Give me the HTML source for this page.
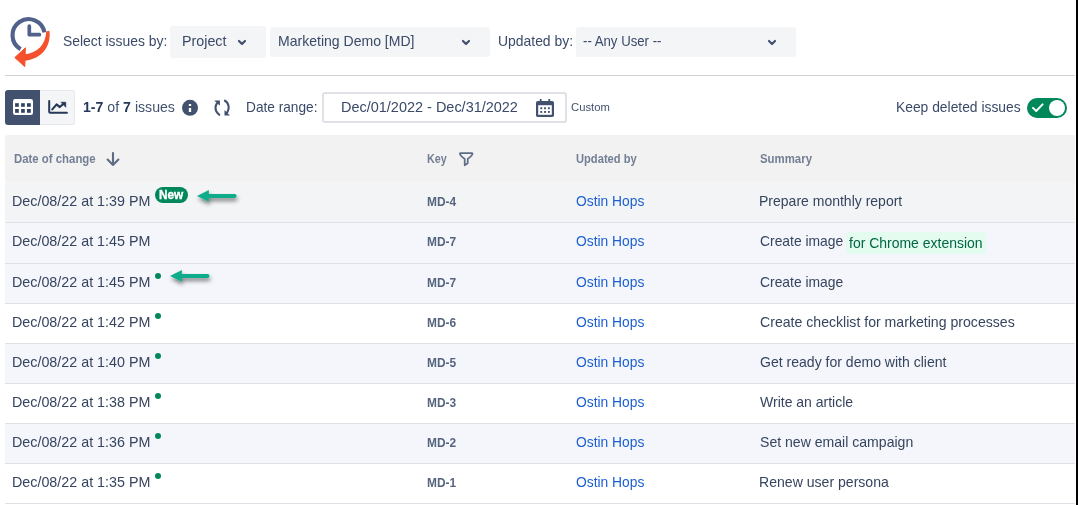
<!DOCTYPE html>
<html><head><meta charset="utf-8"><style>
html,body{margin:0;padding:0;}
body{-webkit-font-smoothing:antialiased;width:1078px;height:505px;overflow:hidden;position:relative;background:#fff;font-family:"Liberation Sans",sans-serif;}
.t{position:absolute;white-space:nowrap;}
b{font-weight:700}
</style></head><body><div style="position:absolute;left:0;top:0;width:1078px;height:505px;will-change:transform">
<svg style="position:absolute;left:0;top:0" width="60" height="72" viewBox="0 0 60 72">
<path d="M20.55 49.14 A16.1 16.1 0 1 1 44.46 32.4" fill="none" stroke="#50618a" stroke-width="4.1"/>
<path d="M29.3 26.2 V34.7 H39.4" fill="none" stroke="#50618a" stroke-width="3.7" stroke-linecap="round" stroke-linejoin="round"/>
<path d="M46.2 31.6 L49.4 30.8 C51.5 46 42 59 25 60.8 L25 54.3 C37 53 45.8 45 46.2 31.6 Z" fill="#f4512c"/>
<path d="M14.8 57.6 L25.4 47.8 L24.8 66.6 Z" fill="#f4512c" stroke="#f4512c" stroke-width="1" stroke-linejoin="round"/>
</svg>
<div class="t" style="left:62.77px;top:32.80px;font-size:14.5px;line-height:16px;font-weight:400;color:#3a4a68;transform:scaleX(0.9586);transform-origin:0 0;">Select issues by:</div>
<div style="position:absolute;left:170px;top:26px;width:96px;height:31.5px;background:#f4f5f7;border-radius:3px"></div>
<div class="t" style="left:181.63px;top:32.80px;font-size:14.5px;line-height:16px;font-weight:400;color:#3a4a68;transform:scaleX(0.9856);transform-origin:0 0;">Project</div>
<svg style="position:absolute;left:237px;top:38.5px" width="10" height="8" viewBox="0 0 10 8"><path d="M2 2 L5 5 L8 2" fill="none" stroke="#42526e" stroke-width="2.2" stroke-linecap="round" stroke-linejoin="round"/></svg>
<div style="position:absolute;left:270px;top:27px;width:220px;height:30px;background:#f4f5f7;border-radius:3px"></div>
<div class="t" style="left:277.65px;top:33.10px;font-size:14.5px;line-height:16px;font-weight:400;color:#3a4a68;transform:scaleX(0.9677);transform-origin:0 0;">Marketing Demo [MD]</div>
<svg style="position:absolute;left:461px;top:38.5px" width="10" height="8" viewBox="0 0 10 8"><path d="M2 2 L5 5 L8 2" fill="none" stroke="#42526e" stroke-width="2.2" stroke-linecap="round" stroke-linejoin="round"/></svg>
<div class="t" style="left:497.83px;top:33.00px;font-size:14.5px;line-height:16px;font-weight:400;color:#3a4a68;transform:scaleX(0.9597);transform-origin:0 0;">Updated by:</div>
<div style="position:absolute;left:576px;top:27px;width:220px;height:30px;background:#f4f5f7;border-radius:3px"></div>
<div class="t" style="left:582.91px;top:33.00px;font-size:14.5px;line-height:16px;font-weight:400;color:#3a4a68;transform:scaleX(0.9100);transform-origin:0 0;">-- Any User --</div>
<svg style="position:absolute;left:767px;top:38.5px" width="10" height="8" viewBox="0 0 10 8"><path d="M2 2 L5 5 L8 2" fill="none" stroke="#42526e" stroke-width="2.2" stroke-linecap="round" stroke-linejoin="round"/></svg>
<div style="position:absolute;left:5px;top:75px;width:1070px;height:1px;background:#cfcfcf"></div>
<div style="position:absolute;left:5px;top:90px;width:35px;height:35px;background:#42526e;border-radius:3px 0 0 3px"></div>
<svg style="position:absolute;left:5px;top:90px" width="35" height="35" viewBox="0 0 35 35">
<rect x="8" y="9" width="20" height="16" rx="2.2" fill="#fff"/>
<g fill="#33425f"><rect x="10.1" y="13.2" width="3.7" height="3.6"/><rect x="16.1" y="13.2" width="3.7" height="3.6"/><rect x="22" y="13.2" width="3.8" height="3.6"/>
<rect x="10.1" y="19" width="3.7" height="3.8"/><rect x="16.1" y="19" width="3.7" height="3.8"/><rect x="22" y="19" width="3.8" height="3.8"/></g>
</svg>
<div style="position:absolute;left:40px;top:90px;width:35px;height:35px;box-sizing:border-box;background:#f4f5f7;border:1px solid #e6e8ec;border-left:none;border-radius:0 3px 3px 0"></div>
<svg style="position:absolute;left:40px;top:88px" width="40" height="40" viewBox="0 0 40 40">
<path d="M9.2 12.9 V23.7 Q9.2 24.7 10.2 24.7 H26.9" fill="none" stroke="#253858" stroke-width="2" stroke-linecap="round"/>
<path d="M12.3 21.4 L16.6 16.4 L19.8 19.1 L23.8 15.4" fill="none" stroke="#253858" stroke-width="2.1" stroke-linecap="round" stroke-linejoin="round"/>
<path d="M20.9 14.2 L25.8 14.2 L25.8 19.3 Z" fill="#253858" stroke="#253858" stroke-width="0.6" stroke-linejoin="round"/>
</svg>
<div class="t" style="left:82.91px;top:98.70px;font-size:14.5px;line-height:16px;color:#42526e;transform:scaleX(0.9746);transform-origin:0 0"><b style="color:#253858">1-7</b> of <b style="color:#253858">7</b> issues</div>
<svg style="position:absolute;left:181px;top:99px" width="18" height="18" viewBox="0 0 18 18">
<circle cx="9" cy="8.8" r="8" fill="#42526e"/><rect x="7.85" y="5" width="2.3" height="2" fill="#fff"/><rect x="7.85" y="9" width="2.3" height="4" fill="#fff"/></svg>
<svg style="position:absolute;left:212px;top:98px" width="20" height="20" viewBox="0 0 20 20">
<path d="M6.5 4.2 C3.2 6.2 1.6 12.2 7.3 16.8" fill="none" stroke="#42526e" stroke-width="2.1" stroke-linecap="round"/>
<path d="M12.9 2.7 C16.6 4.6 18.6 10.8 14 15.7" fill="none" stroke="#42526e" stroke-width="2.1" stroke-linecap="round"/>
<path d="M2.2 2.4 L7.9 2.4 L7.9 7.8 Z" fill="#42526e"/>
<path d="M12.5 12.1 L12.5 17.5 L17.9 17.5 Z" fill="#42526e"/>
</svg>
<div class="t" style="left:246.08px;top:98.80px;font-size:14.5px;line-height:16px;font-weight:400;color:#3a4a68;transform:scaleX(0.9432);transform-origin:0 0;">Date range:</div>
<div style="position:absolute;left:321.5px;top:92.2px;width:245px;height:31px;box-sizing:border-box;border:2px solid #dfe1e6;border-radius:3px;background:#fff"></div>
<div class="t" style="left:340.81px;top:98.90px;font-size:14.5px;line-height:16px;font-weight:400;color:#3a4a68;transform:scaleX(0.9976);transform-origin:0 0;">Dec/01/2022 - Dec/31/2022</div>
<svg style="position:absolute;left:535px;top:98px" width="20" height="20" viewBox="0 0 20 20">
<rect x="1" y="3" width="18" height="16" rx="1.8" fill="#42526e"/>
<rect x="3.2" y="7.2" width="13.6" height="9.6" fill="#fff"/>
<rect x="4.8" y="1" width="1.8" height="3" fill="#42526e"/><rect x="13.4" y="1" width="1.8" height="3" fill="#42526e"/>
<g fill="#42526e"><rect x="5.3" y="9.3" width="1.9" height="1.9"/><rect x="9.1" y="9.3" width="1.9" height="1.9"/><rect x="12.9" y="9.3" width="1.9" height="1.9"/>
<rect x="5.3" y="13" width="1.9" height="1.9"/><rect x="9.1" y="13" width="1.9" height="1.9"/><rect x="12.9" y="13" width="1.9" height="1.9"/></g>
</svg>
<div class="t" style="left:570.93px;top:100.70px;font-size:10.8px;line-height:12px;font-weight:400;color:#42526e;transform:scaleX(1.0431);transform-origin:0 0;">Custom</div>
<div class="t" style="left:896.26px;top:98.80px;font-size:14.5px;line-height:16px;font-weight:400;color:#3a4a68;transform:scaleX(0.9544);transform-origin:0 0;">Keep deleted issues</div>
<div style="position:absolute;left:1027px;top:98px;width:40px;height:20px;background:#00875a;border-radius:10px"></div>
<div style="position:absolute;left:1049px;top:100px;width:16px;height:16px;background:#fff;border-radius:50%"></div>
<svg style="position:absolute;left:1030px;top:101px" width="16" height="14" viewBox="0 0 16 14"><path d="M3 6.9 L6.2 10 L12.6 3.4" fill="none" stroke="#fff" stroke-width="2" stroke-linecap="round" stroke-linejoin="round"/></svg>
<div style="position:absolute;left:5px;top:135px;width:1070px;height:47px;background:#f2f2f2;border-radius:3px 0 0 3px"></div>
<div class="t" style="left:13.54px;top:150.90px;font-size:13px;line-height:15px;font-weight:700;color:#737f94;transform:scaleX(0.8762);transform-origin:0 0;">Date of change</div>
<svg style="position:absolute;left:104px;top:150px" width="18" height="18" viewBox="0 0 18 18"><path d="M9 3 V15 M3.6 9.6 L9 15 L14.4 9.6" fill="none" stroke="#5e6c84" stroke-width="2.1" stroke-linecap="round" stroke-linejoin="round"/></svg>
<div class="t" style="left:427.48px;top:151.20px;font-size:13px;line-height:15px;font-weight:700;color:#737f94;transform:scaleX(0.8294);transform-origin:0 0;">Key</div>
<svg style="position:absolute;left:458px;top:151px" width="16" height="16" viewBox="0 0 16 16"><path d="M2.6 2.1 H13.8 Q14.9 2.1 14.3 3.4 Q13.6 5 11.4 6.6 L9.7 8 V12.3 L6.7 14.3 V8 L5 6.6 Q2.8 5 2.1 3.4 Q1.5 2.1 2.6 2.1 Z" fill="none" stroke="#5e6c84" stroke-width="1.7" stroke-linejoin="round"/></svg>
<div class="t" style="left:576.33px;top:151.20px;font-size:13px;line-height:15px;font-weight:700;color:#737f94;transform:scaleX(0.8580);transform-origin:0 0;">Updated by</div>
<div class="t" style="left:760.37px;top:150.90px;font-size:13px;line-height:15px;font-weight:700;color:#737f94;transform:scaleX(0.8775);transform-origin:0 0;">Summary</div>
<div style="position:absolute;left:5px;top:182px;width:1070px;height:40px;background:#f3f4f6"></div>
<div style="position:absolute;left:5px;top:222px;width:1070px;height:1px;background:#dfe1e6"></div>
<div class="t" style="left:12.43px;top:192.70px;font-size:14.5px;line-height:16px;font-weight:400;color:#36455f;transform:scaleX(0.9864);transform-origin:0 0;">Dec/08/22 at 1:39 PM</div>
<div class="t" style="left:426.50px;top:194.90px;font-size:12.5px;line-height:14px;font-weight:700;color:#56657e;transform:scaleX(0.9544);transform-origin:0 0;">MD-4</div>
<div class="t" style="left:575.95px;top:192.70px;font-size:14.5px;line-height:16px;font-weight:400;color:#1c5fd0;transform:scaleX(0.9530);transform-origin:0 0;">Ostin Hops</div>
<div class="t" style="left:759.15px;top:192.70px;font-size:14.5px;line-height:16px;font-weight:400;color:#36455f;transform:scaleX(0.9660);transform-origin:0 0;">Prepare monthly report</div>
<div style="position:absolute;left:5px;top:223px;width:1070px;height:40px;background:#f4f6fb"></div>
<div style="position:absolute;left:5px;top:263px;width:1070px;height:1px;background:#dfe1e6"></div>
<div class="t" style="left:12.43px;top:233.00px;font-size:14.5px;line-height:16px;font-weight:400;color:#36455f;transform:scaleX(0.9864);transform-origin:0 0;">Dec/08/22 at 1:45 PM</div>
<div class="t" style="left:426.50px;top:235.20px;font-size:12.5px;line-height:14px;font-weight:700;color:#56657e;transform:scaleX(0.9544);transform-origin:0 0;">MD-7</div>
<div class="t" style="left:575.95px;top:233.00px;font-size:14.5px;line-height:16px;font-weight:400;color:#1c5fd0;transform:scaleX(0.9530);transform-origin:0 0;">Ostin Hops</div>
<div class="t" style="left:759.60px;top:233.00px;font-size:14.5px;line-height:16px;font-weight:400;color:#36455f;transform:scaleX(0.9561);transform-origin:0 0;">Create image</div>
<div style="position:absolute;left:5px;top:264px;width:1070px;height:39px;background:#f4f6fb"></div>
<div style="position:absolute;left:5px;top:303px;width:1070px;height:1px;background:#dfe1e6"></div>
<div class="t" style="left:12.43px;top:273.70px;font-size:14.5px;line-height:16px;font-weight:400;color:#36455f;transform:scaleX(0.9864);transform-origin:0 0;">Dec/08/22 at 1:45 PM</div>
<div class="t" style="left:426.50px;top:275.90px;font-size:12.5px;line-height:14px;font-weight:700;color:#56657e;transform:scaleX(0.9544);transform-origin:0 0;">MD-7</div>
<div class="t" style="left:575.95px;top:273.70px;font-size:14.5px;line-height:16px;font-weight:400;color:#1c5fd0;transform:scaleX(0.9530);transform-origin:0 0;">Ostin Hops</div>
<div class="t" style="left:759.60px;top:273.70px;font-size:14.5px;line-height:16px;font-weight:400;color:#36455f;transform:scaleX(0.9561);transform-origin:0 0;">Create image</div>
<div style="position:absolute;left:155px;top:273px;width:6px;height:6px;background:#00875a;border-radius:50%"></div>
<div style="position:absolute;left:5px;top:304px;width:1070px;height:39px;background:#ffffff"></div>
<div style="position:absolute;left:5px;top:343px;width:1070px;height:1px;background:#dfe1e6"></div>
<div class="t" style="left:12.43px;top:313.70px;font-size:14.5px;line-height:16px;font-weight:400;color:#36455f;transform:scaleX(0.9864);transform-origin:0 0;">Dec/08/22 at 1:42 PM</div>
<div class="t" style="left:426.50px;top:315.90px;font-size:12.5px;line-height:14px;font-weight:700;color:#56657e;transform:scaleX(0.9544);transform-origin:0 0;">MD-6</div>
<div class="t" style="left:575.95px;top:313.70px;font-size:14.5px;line-height:16px;font-weight:400;color:#1c5fd0;transform:scaleX(0.9530);transform-origin:0 0;">Ostin Hops</div>
<div class="t" style="left:759.58px;top:313.70px;font-size:14.5px;line-height:16px;font-weight:400;color:#36455f;transform:scaleX(0.9726);transform-origin:0 0;">Create checklist for marketing processes</div>
<div style="position:absolute;left:155px;top:313px;width:6px;height:6px;background:#00875a;border-radius:50%"></div>
<div style="position:absolute;left:5px;top:344px;width:1070px;height:39px;background:#f4f6fb"></div>
<div style="position:absolute;left:5px;top:383px;width:1070px;height:1px;background:#dfe1e6"></div>
<div class="t" style="left:12.43px;top:353.70px;font-size:14.5px;line-height:16px;font-weight:400;color:#36455f;transform:scaleX(0.9864);transform-origin:0 0;">Dec/08/22 at 1:40 PM</div>
<div class="t" style="left:426.50px;top:355.90px;font-size:12.5px;line-height:14px;font-weight:700;color:#56657e;transform:scaleX(0.9544);transform-origin:0 0;">MD-5</div>
<div class="t" style="left:575.95px;top:353.70px;font-size:14.5px;line-height:16px;font-weight:400;color:#1c5fd0;transform:scaleX(0.9530);transform-origin:0 0;">Ostin Hops</div>
<div class="t" style="left:759.59px;top:353.70px;font-size:14.5px;line-height:16px;font-weight:400;color:#36455f;transform:scaleX(0.9683);transform-origin:0 0;">Get ready for demo with client</div>
<div style="position:absolute;left:155px;top:353px;width:6px;height:6px;background:#00875a;border-radius:50%"></div>
<div style="position:absolute;left:5px;top:384px;width:1070px;height:39px;background:#ffffff"></div>
<div style="position:absolute;left:5px;top:423px;width:1070px;height:1px;background:#dfe1e6"></div>
<div class="t" style="left:12.43px;top:393.70px;font-size:14.5px;line-height:16px;font-weight:400;color:#36455f;transform:scaleX(0.9864);transform-origin:0 0;">Dec/08/22 at 1:38 PM</div>
<div class="t" style="left:426.50px;top:395.90px;font-size:12.5px;line-height:14px;font-weight:700;color:#56657e;transform:scaleX(0.9544);transform-origin:0 0;">MD-3</div>
<div class="t" style="left:575.95px;top:393.70px;font-size:14.5px;line-height:16px;font-weight:400;color:#1c5fd0;transform:scaleX(0.9530);transform-origin:0 0;">Ostin Hops</div>
<div class="t" style="left:760.24px;top:393.70px;font-size:14.5px;line-height:16px;font-weight:400;color:#36455f;transform:scaleX(0.9658);transform-origin:0 0;">Write an article</div>
<div style="position:absolute;left:155px;top:393px;width:6px;height:6px;background:#00875a;border-radius:50%"></div>
<div style="position:absolute;left:5px;top:424px;width:1070px;height:39px;background:#f4f6fb"></div>
<div style="position:absolute;left:5px;top:463px;width:1070px;height:1px;background:#dfe1e6"></div>
<div class="t" style="left:12.43px;top:433.70px;font-size:14.5px;line-height:16px;font-weight:400;color:#36455f;transform:scaleX(0.9864);transform-origin:0 0;">Dec/08/22 at 1:36 PM</div>
<div class="t" style="left:426.50px;top:435.90px;font-size:12.5px;line-height:14px;font-weight:700;color:#56657e;transform:scaleX(0.9544);transform-origin:0 0;">MD-2</div>
<div class="t" style="left:575.95px;top:433.70px;font-size:14.5px;line-height:16px;font-weight:400;color:#1c5fd0;transform:scaleX(0.9530);transform-origin:0 0;">Ostin Hops</div>
<div class="t" style="left:759.66px;top:433.70px;font-size:14.5px;line-height:16px;font-weight:400;color:#36455f;transform:scaleX(0.9701);transform-origin:0 0;">Set new email campaign</div>
<div style="position:absolute;left:155px;top:433px;width:6px;height:6px;background:#00875a;border-radius:50%"></div>
<div style="position:absolute;left:5px;top:464px;width:1070px;height:39px;background:#ffffff"></div>
<div style="position:absolute;left:5px;top:503px;width:1070px;height:1px;background:#dfe1e6"></div>
<div class="t" style="left:12.43px;top:473.70px;font-size:14.5px;line-height:16px;font-weight:400;color:#36455f;transform:scaleX(0.9864);transform-origin:0 0;">Dec/08/22 at 1:35 PM</div>
<div class="t" style="left:426.50px;top:475.90px;font-size:12.5px;line-height:14px;font-weight:700;color:#56657e;transform:scaleX(0.9544);transform-origin:0 0;">MD-1</div>
<div class="t" style="left:575.95px;top:473.70px;font-size:14.5px;line-height:16px;font-weight:400;color:#1c5fd0;transform:scaleX(0.9530);transform-origin:0 0;">Ostin Hops</div>
<div class="t" style="left:759.15px;top:473.70px;font-size:14.5px;line-height:16px;font-weight:400;color:#36455f;transform:scaleX(0.9705);transform-origin:0 0;">Renew user persona</div>
<div style="position:absolute;left:155px;top:473px;width:6px;height:6px;background:#00875a;border-radius:50%"></div>
<div style="position:absolute;left:155px;top:187px;width:33px;height:16px;background:#00875a;border-radius:8px"></div>
<div class="t" style="left:159.11px;top:187.70px;font-size:12px;line-height:14px;font-weight:700;color:#fff;transform:scaleX(0.9835);transform-origin:0 0;-webkit-text-stroke:0.35px #fff;">New</div>
<div style="position:absolute;left:846px;top:232px;width:140px;height:22px;background:#e3fcef;border-radius:3px"></div>
<div class="t" style="left:848.90px;top:234.80px;font-size:14.5px;line-height:16px;font-weight:400;color:#006644;transform:scaleX(0.9638);transform-origin:0 0;">for Chrome extension</div>
<svg style="position:absolute;left:193.7px;top:184px;overflow:visible" width="52.70000000000002" height="28" viewBox="0 0 52.70000000000002 28">
<defs><filter id="sh197" x="-30%" y="-60%" width="160%" height="220%"><feGaussianBlur in="SourceAlpha" stdDeviation="2.2"/><feOffset dx="1.5" dy="3.5" result="o"/><feComponentTransfer><feFuncA type="linear" slope="0.5"/></feComponentTransfer><feMerge><feMergeNode/><feMergeNode in="SourceGraphic"/></feMerge></filter></defs>
<g filter="url(#sh197)"><path d="M3 12 L14.9 6 L14.9 17.7 Z" fill="#0dad8c"/><path d="M14 12 H40.70000000000002" stroke="#0dad8c" stroke-width="3.8" stroke-linecap="round"/></g></svg>
<svg style="position:absolute;left:166.5px;top:264px;overflow:visible" width="52.599999999999994" height="28" viewBox="0 0 52.599999999999994 28">
<defs><filter id="sh170" x="-30%" y="-60%" width="160%" height="220%"><feGaussianBlur in="SourceAlpha" stdDeviation="2.2"/><feOffset dx="1.5" dy="3.5" result="o"/><feComponentTransfer><feFuncA type="linear" slope="0.5"/></feComponentTransfer><feMerge><feMergeNode/><feMergeNode in="SourceGraphic"/></feMerge></filter></defs>
<g filter="url(#sh170)"><path d="M3 12 L14.9 6 L14.9 17.7 Z" fill="#0dad8c"/><path d="M14 12 H40.599999999999994" stroke="#0dad8c" stroke-width="3.8" stroke-linecap="round"/></g></svg>
<div style="position:absolute;left:1076px;top:0;width:2px;height:505px;background:#000"></div></div>
</body></html>
